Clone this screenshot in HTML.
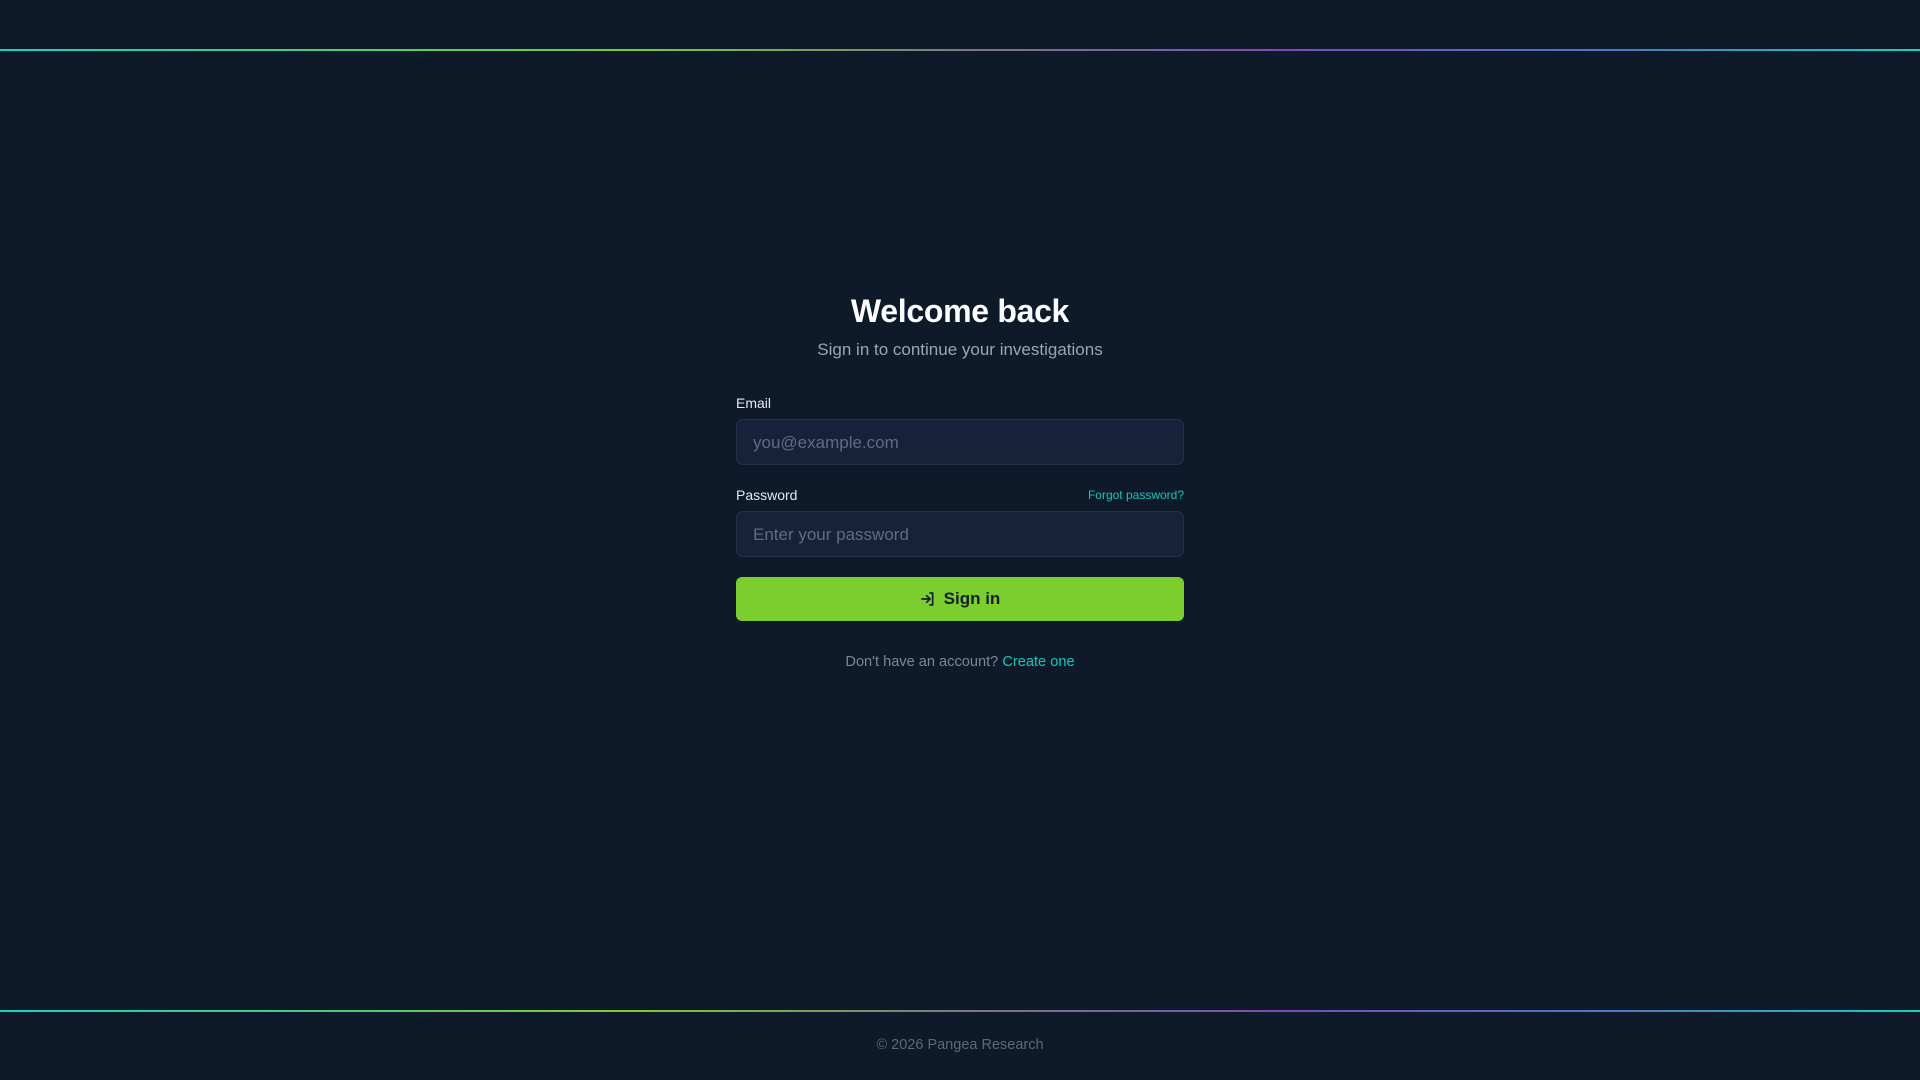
<!DOCTYPE html>
<html><head><meta charset="utf-8"><style>
*{box-sizing:border-box;margin:0;padding:0}
html,body{width:1920px;height:1080px;background:#0e1a2a;font-family:"Liberation Sans",sans-serif;overflow:hidden;position:relative}
.line{position:absolute;left:0;width:1920px;height:2px;background:linear-gradient(90deg,#14d0c4 0%,#7ccd2e 33%,#7a7a80 50%,#7c4bb8 67%,#4a7cc0 85%,#14d0c4 100%)}
.abs{position:absolute}
h1{position:absolute;left:0;width:1920px;top:293px;text-align:center;color:#fff;font-size:32px;font-weight:bold;letter-spacing:-0.3px}
.sub{top:340px;left:0;width:1920px;text-align:center;color:#9aa5b5;font-size:17px}
.lbl{color:#e4e8ee;font-size:14px}
.inp{left:736px;width:448px;height:46px;background:#162238;border:1px solid #243249;border-radius:7px;color:#5f6c80;font-size:17px;padding-left:16px;line-height:46px}
.btn{left:736px;top:577px;width:448px;height:44px;background:#7ccd2e;border-radius:6px;color:#13202c;font-size:17px;font-weight:bold;display:flex;align-items:center;justify-content:center;gap:8px}
.teal{color:#14c8b8}
</style></head><body>
<div class="line" style="top:49px"></div>
<h1>Welcome back</h1>
<div class="abs sub">Sign in to continue your investigations</div>
<div class="abs lbl" style="left:736px;top:395px">Email</div>
<div class="abs inp" style="top:419px">you@example.com</div>
<div class="abs lbl" style="left:736px;top:487px">Password</div>
<div class="abs teal" style="right:736px;top:488px;font-size:12px">Forgot password?</div>
<div class="abs inp" style="top:511px">Enter your password</div>
<div class="abs btn"><svg width="16" height="16" viewBox="0 0 24 24" fill="none" stroke="#13202c" stroke-width="2.5" stroke-linecap="round" stroke-linejoin="round"><path d="M15 3h4v18h-4"/><path d="M10 17l5-5-5-5"/><path d="M15 12H3"/></svg><span>Sign in</span></div>
<div class="abs" style="left:0;width:1920px;top:654px;text-align:center;font-size:14.6px;color:#7b8696">Don't have an account? <span class="teal">Create one</span></div>
<div class="line" style="top:1010px"></div>
<div class="abs" style="left:0;width:1920px;top:1037px;text-align:center;font-size:14.5px;color:#5d6878">© 2026 Pangea Research</div>
</body></html>
